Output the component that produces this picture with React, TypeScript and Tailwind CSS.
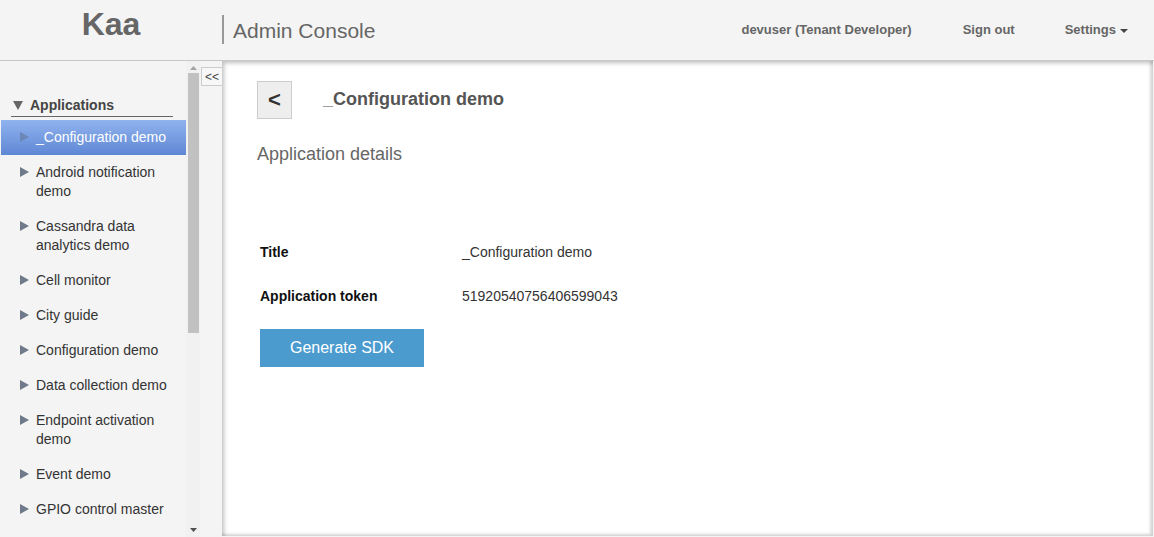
import React from "react";

const items: string[][] = [
  ["Android notification", "demo"],
  ["Cassandra data", "analytics demo"],
  ["Cell monitor"],
  ["City guide"],
  ["Configuration demo"],
  ["Data collection demo"],
  ["Endpoint activation", "demo"],
  ["Event demo"],
  ["GPIO control master"],
];

function Tri({ color = "#6f7a8a" }: { color?: string }) {
  return (
    <svg width="9" height="10" viewBox="0 0 9 10" className="shrink-0 mt-[4px]">
      <path d="M0 0 L9 5 L0 10 Z" fill={color} />
    </svg>
  );
}

export default function App() {
  return (
    <div
      className="w-[1154px] h-[537px] bg-[#f4f4f4] flex flex-col overflow-hidden text-[#333]"
      style={{ fontFamily: '"Liberation Sans", Arial, sans-serif' }}
    >
      {/* Header */}
      <div className="h-[61px] shrink-0 border-b border-[#c8c8c8] flex items-center">
        <div className="w-[222px] text-center text-[32px] font-bold text-[#666] leading-none -mt-[13px]">Kaa</div>
        <div className="h-[29px] border-l-2 border-[#999] -mt-[2px]" />
        <div className="ml-[9px] text-[21px] text-[#666] leading-none mt-[1px]">Admin Console</div>
        <div className="flex-1" />
        <div className="flex items-center text-[13px] font-bold text-[#666]">
          <span>devuser (Tenant Developer)</span>
          <span className="ml-[51px]">Sign out</span>
          <span className="ml-[50px] flex items-center">
            Settings
            <svg width="8" height="4" viewBox="0 0 8 4" className="ml-[4px] mt-[2px]">
              <path d="M0 0 L8 0 L4 4 Z" fill="#444" />
            </svg>
          </span>
          <span className="w-[26px]" />
        </div>
      </div>

      {/* Body */}
      <div className="flex flex-1 min-h-0">
        {/* Sidebar */}
        <div className="w-[222px] shrink-0 flex">
          <div className="w-[186px] shrink-0 pl-[1px] pt-[34px] overflow-hidden">
            <div className="ml-[10px] mr-[13px] border-b border-[#666] flex items-center h-[22px] pl-[2px]">
              <svg width="10" height="9" viewBox="0 0 10 9" className="shrink-0">
                <path d="M0 0 L10 0 L5 9 Z" fill="#666" />
              </svg>
              <span className="ml-[7px] text-[14px] font-bold text-[#444]">Applications</span>
            </div>
            <div className="mt-[3px]">
              <div
                className="h-[35px] flex items-start pl-[19px] pt-[8px] text-white text-[14px] leading-[19px]"
                style={{ background: "linear-gradient(#90b3ee, #5f87d4)" }}
              >
                <Tri color="#6d86b8" />
                <span className="ml-[7px]">_Configuration demo</span>
              </div>
              {items.map((lines, i) => (
                <div key={i} className="flex items-start pl-[19px] py-[8px] text-[14px] leading-[19px] text-[#333]">
                  <Tri />
                  <span className="ml-[7px]">
                    {lines.map((l, j) => (
                      <div key={j}>{l}</div>
                    ))}
                  </span>
                </div>
              ))}
            </div>
          </div>
          {/* scrollbar */}
          <div className="w-[14px] shrink-0 bg-[#f1f1f1] flex flex-col items-center">
            <svg width="7" height="4" viewBox="0 0 7 4" className="mt-[5px]">
              <path d="M0 4 L7 4 L3.5 0 Z" fill="#a3a3a3" />
            </svg>
            <div className="w-[11px] h-[260px] bg-[#c1c1c1] mt-[3px]" />
            <div className="flex-1" />
            <svg width="7" height="4" viewBox="0 0 7 4" className="mb-[5px]">
              <path d="M0 0 L7 0 L3.5 4 Z" fill="#505050" />
            </svg>
          </div>
          <div className="w-[22px] shrink-0 pt-[6px] pl-[1px]">
            <div className="w-[21px] h-[19px] border border-[#ccc] border-r-0 bg-[#f7f7f7] text-[12px] text-[#444] flex items-center justify-center leading-none">
              &lt;&lt;
            </div>
          </div>
        </div>

        {/* Content */}
        <div className="flex-1 mr-[1px] mb-[1px] bg-white shadow-[inset_2px_2px_4px_rgba(0,0,0,0.25),inset_-3px_-2px_3px_rgba(0,0,0,0.15)] pl-[35px] pt-[20px]">
          <div className="flex items-center">
            <div className="w-[35px] h-[38px] bg-[#eee] border border-[#ccc] flex items-center justify-center text-[22px] font-bold text-[#333] leading-none">
              &lt;
            </div>
            <div className="ml-[31px] -mt-[2px] text-[18px] font-bold text-[#555]">_Configuration demo</div>
          </div>
          <div className="mt-[22px] text-[18px] text-[#666]">Application details</div>
          <div className="mt-[74px] ml-[3px] text-[14px]">
            <div className="flex items-center h-[20px]">
              <span className="w-[202px] font-bold text-[#111]">Title</span>
              <span className="text-[#333]">_Configuration demo</span>
            </div>
            <div className="flex items-center h-[20px] mt-[24px]">
              <span className="w-[202px] font-bold text-[#111]">Application token</span>
              <span className="text-[#333]">51920540756406599043</span>
            </div>
            <div className="mt-[23px] w-[164px] h-[38px] bg-[#4b9bcf] text-white text-[16px] flex items-center justify-center">
              Generate SDK
            </div>
          </div>
        </div>
      </div>
    </div>
  );
}
